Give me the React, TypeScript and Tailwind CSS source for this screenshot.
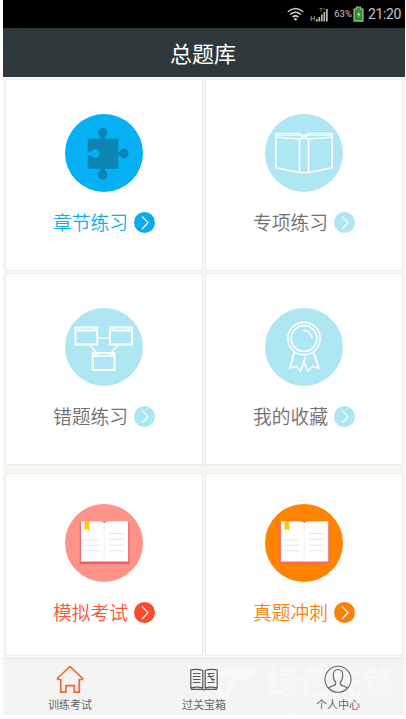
import type { ReactNode } from 'react';
import { clsx } from 'clsx';

function PuzzleArt() {
  return (
    <g fill="#0b85b3">
      <path d="M22.7 24.8H53.3V54.8H22.7V41.2L26.2 41.6A4.4 4.4 0 1 0 26.2 37.4L22.7 37.8Z" />
      <circle cx="37.7" cy="18.7" r="4.8" />
      <circle cx="58.8" cy="39.5" r="4.7" />
      <circle cx="37.7" cy="60.8" r="4.8" />
      <path d="M35.7 21h4v5h-4zM52 37.7h5v3.8h-5zM35.7 54h4v4h-4z" />
    </g>
  );
}

function OutlineBookArt() {
  return (
    <g fill="none" stroke="#fff" strokeWidth="1.5" strokeLinejoin="round">
      <path d="M10.8 23.2 34.5 25V58.6L10.8 53.8ZM67.2 23.2 43.5 25V58.6L67.2 53.8Z" />
      <path d="M10.8 23.2V19.4H31Q36.5 19.4 39 22.5Q41.5 19.4 47 19.4H67.2V23.2M34.5 25Q39 23.2 43.5 25M34.5 58.6H43.5" />
      <path d="M12 21.3H31Q36 21.3 38 23.6M66 21.3H47Q42 21.3 40 23.6" strokeWidth="1" />
    </g>
  );
}

function WindowsArt() {
  return (
    <g fill="none" stroke="#fff" strokeWidth="1.8">
      <path d="M10.5 19.5h21.8v17H10.5zM45 19.5h22v17H45zM27.7 45h21.8v17H27.7z" />
      <path d="M10.5 22.7h21.8M45 22.7h22M27.7 48.2h21.8" />
      <path d="M32.3 30.2H45M24.5 36.5 31.5 45M53.5 36.5 46 45" strokeWidth="1.3" />
      <path d="M12 21h4M27 21h4M46.500 21h4M61.500 21h4M29.200 46.500h4M44.200 46.500h4" strokeWidth="1" />
    </g>
  );
}

function MedalArt() {
  return (
    <g fill="none" stroke="#fff" strokeWidth="1.6" strokeLinejoin="round" strokeLinecap="round">
      <circle cx="39" cy="30.5" r="16.2" />
      <circle cx="39" cy="30.5" r="12.9" />
      <path d="M39 22.5A8.200 8.200 0 0 1 47 30" />
      <path d="M29.300 44.500 25 60 31.800 58.500 35.600 63.500 40.500 48.500M48.700 44.500 53.800 60 47.300 58.500 43 63.500 38.700 54" />
    </g>
  );
}

function OpenBookArt({ cover }: { cover: string }) {
  return (
    <>
      <path fill={cover} d="M14.8 18H64.4V60H14.8Z" />
      <path fill="#fff" d="M15.9 17.2H34Q38 17.2 39.2 19.2Q40.5 17.2 44 17.2H63.2V57.5H15.9Z" />
      <path d="M39.2 19.5V57.5" stroke="#fbe9eb" strokeWidth="1" />
      <path fill="#fdc70c" d="M19.5 17h4.8v9.7L21.9 25l-2.4 1.7z" />
      <path
        d="M19 36h14.5M19 41.3h14.5M19 46.7h14.5M44 29.5h14.5M44 35.3h14.5M44 41h14.5M44 46.7h14.5"
        stroke="#e8e5ea"
        strokeWidth="1.1"
      />
    </>
  );
}

type Tile = {
  label: string;
  circle: string;
  arrow: string;
  text: string;
  art: ReactNode;
};

const practice: Tile[] = [
  { label: '章节练习', circle: 'bg-[#05b0f5]', arrow: 'bg-[#0cacea]', text: 'text-[#12ade8]', art: <PuzzleArt /> },
  { label: '专项练习', circle: 'bg-[#aee6f4]', arrow: 'bg-[#aee6f4]', text: 'text-[#707070]', art: <OutlineBookArt /> },
  { label: '错题练习', circle: 'bg-[#aee6f4]', arrow: 'bg-[#aee6f4]', text: 'text-[#707070]', art: <WindowsArt /> },
  { label: '我的收藏', circle: 'bg-[#aee6f4]', arrow: 'bg-[#aee6f4]', text: 'text-[#707070]', art: <MedalArt /> },
];

const exams: Tile[] = [
  { label: '模拟考试', circle: 'bg-[#ff9289]', arrow: 'bg-[#fa4b2c]', text: 'text-[#fa5335]', art: <OpenBookArt cover="#ee5b68" /> },
  { label: '真题冲刺', circle: 'bg-[#ff8200]', arrow: 'bg-[#fb8008]', text: 'text-[#f8830f]', art: <OpenBookArt cover="#fb6666" /> },
];

function TileCard({ tile, className }: { tile: Tile; className: string }) {
  return (
    <button
      className={clsx('flex flex-col items-center border border-[#eeeee8] bg-white', className)}
    >
      <span className={clsx('block size-[78px] shrink-0 rounded-full', tile.circle)}>
        <svg viewBox="0 0 78 78" className="size-[78px]">{tile.art}</svg>
      </span>
      <span className="mt-[19px] flex items-center gap-[6px]">
        <span className={clsx('text-[18.8px] leading-[22px] font-[350] whitespace-nowrap', tile.text)}>{tile.label}</span>
        <span className={clsx('flex size-[21px] items-center justify-center rounded-full', tile.arrow)}>
          <svg viewBox="0 0 21 21" className="size-[21px]" fill="none" stroke="#fff" strokeWidth="1.1">
            <path d="M8 4.5 14 10.7 8 17" />
          </svg>
        </span>
      </span>
    </button>
  );
}

function StatusBar() {
  return (
    <div className="flex h-7 items-center justify-end bg-black pr-1 font-['Roboto',sans-serif] text-[#c4c4c4]">
      <svg viewBox="0 0 17 14" className="h-[14px] w-[17px]" fill="none" stroke="#d0d0d0" strokeWidth="1.5">
        <path d="M.8 4.8Q8.5-1.8 16.2 4.8M3.2 7.5Q8.5 3 13.8 7.5M5.6 10.1Q8.5 7.7 11.4 10.1" />
        <circle cx="8.5" cy="12.2" r="1.3" fill="#d0d0d0" stroke="none" />
      </svg>
      <div className="ml-[6px] flex items-end">
        <span className="text-[7px] leading-[6px]">H</span>
        <svg viewBox="0 0 13 15" className="h-[15px] w-[13px]" fill="#b8b8b8">
          <path d="M1 12h1.7v2.5H1zM3.5 10h1.7v4.5H3.5zM6 7.5h1.7v7H6zM8.5 5h1.7v9.5H8.5zM11 2h1.7v12.5H11z" />
          <path d="M4.5 1.5h3M6 1.5v3M9 1v2" stroke="#888" strokeWidth=".8" />
        </svg>
      </div>
      <span className="ml-[6px] text-[9.5px] leading-3">63%</span>
      <svg viewBox="0 0 11 16" className="ml-[1px] h-4 w-[11px]">
        <path d="M3.5 1h4v2H10v12.2H1V3h2.5z" fill="#2b922b" stroke="#a9b7a5" strokeWidth="1.2" />
        <path d="M6.5 5.5 4 9h1.700L5 12l2.500-4H6z" fill="#cfe6c9" />
      </svg>
      <span className="ml-1 text-[14px] leading-4 tracking-[-0.35px]">21:20</span>
    </div>
  );
}

function HomeIcon() {
  return (
    <svg viewBox="0 0 28 28" className="size-7" fill="none" stroke="#f26529" strokeWidth="1.7" strokeLinejoin="round">
      <path d="M14 1.5 1.3 13.5 2 14.5H4.7V27.2H10V20.7H18.3V27.2H23.3V14.5H26L26.7 13.5Z" />
    </svg>
  );
}

function NotesIcon() {
  return (
    <svg viewBox="0 0 28 28" className="size-7" fill="none" stroke="#555" strokeWidth="1.2">
      <path d="M.8 5Q7 3.400 12.800 5.500V22.800Q7 21.400 .8 23ZM15.200 5.500Q21 3.400 27.200 5V23Q21 21.400 15.200 22.800ZM.8 24.300H12.800Q14 25.500 15.200 24.300H27.200" />
      <path d="M3 8.500h7.500M3 11.500h7.500M3 14.500h7.500M3 17.500h7.500M17.500 8.500h7M17.500 11.500h4M21 14.500h4M17.500 17.500h7M18.500 9l5 7M20 12.500l4-2" />
    </svg>
  );
}

function PersonIcon() {
  return (
    <svg viewBox="0 0 28 28" className="size-7" fill="none" stroke="#666" strokeWidth="1.1">
      <circle cx="14" cy="14.3" r="13" />
      <path d="M4.500 23.200Q6 21.500 9.500 20.600Q12.200 19.800 11.800 17.500Q9.300 15 9.300 10Q9.300 4.500 14 4.500Q18.700 4.500 18.700 10Q18.700 15 16.200 17.500Q15.800 19.800 18.500 20.600Q22 21.500 23.500 23.200" />
    </svg>
  );
}

const tabs = [
  { label: '训练考试', icon: <HomeIcon /> },
  { label: '过关宝箱', icon: <NotesIcon /> },
  { label: '个人中心', icon: <PersonIcon /> },
];

function Watermark() {
  return (
    <div className="pointer-events-none absolute top-[5px] left-[198px] flex text-white/40">
      <svg viewBox="0 0 62 48" className="h-12 w-[62px]" fill="currentColor">
        <path d="M2 4H60L48 16H34L22 46 12 20H18L23 31 31 12H6Z" />
      </svg>
      <div className="whitespace-nowrap">
        <div className="ml-1 text-[32px] leading-[32px] font-bold">绿色先锋</div>
        <div className="-ml-5 text-[15px] leading-4 tracking-[1.8px]">www.greenxf.com</div>
      </div>
    </div>
  );
}

export default function App() {
  return (
    <div className="h-[719px] w-[406px] overflow-hidden bg-white pr-px pl-[3px] font-['Noto_Sans_CJK_SC',sans-serif]">
      <StatusBar />
      <header className="flex h-[49px] items-center justify-center bg-[#2f383b] pr-[2px] text-[22px] text-white">
        总题库
      </header>

      <main className="h-[581px] bg-[#f8f6f0] px-[2px] pt-[2px]">
        <div className="grid grid-cols-2 gap-x-[2px] gap-y-[2px]">
          {practice.map((tile) => (
            <TileCard key={tile.label} tile={tile} className="h-[192px] pt-[34px]" />
          ))}
        </div>
        <div className="mt-[8px] grid grid-cols-2 gap-x-[2px]">
          {exams.map((tile) => (
            <TileCard key={tile.label} tile={tile} className="h-[183px] pt-[30px]" />
          ))}
        </div>
      </main>

      <nav className="relative grid h-[57px] grid-cols-3 border-t border-[#e5e5e3] bg-[#f4f4f4]">
        <Watermark />
        {tabs.map((tab) => (
          <button key={tab.label} className="relative flex flex-col items-center pt-[6px]">
            {tab.icon}
            <span className="mt-[3px] text-[11px] leading-4 text-[#666]">{tab.label}</span>
          </button>
        ))}
      </nav>
    </div>
  );
}
